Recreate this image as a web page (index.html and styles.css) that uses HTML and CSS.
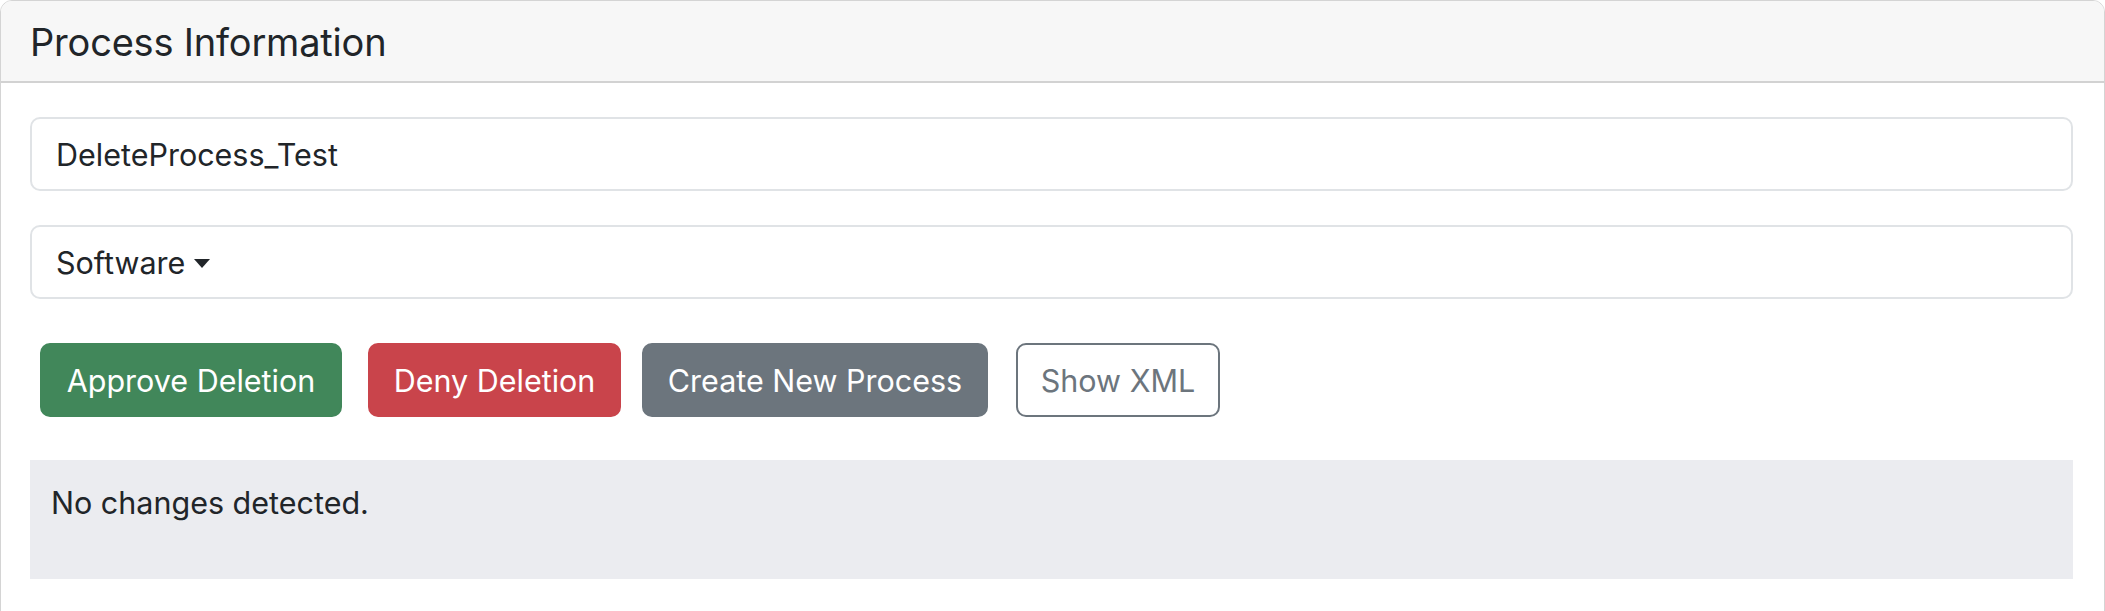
FILE: index.html
```html
<!DOCTYPE html>
<html>
<head>
<meta charset="utf-8">
<link rel="stylesheet" href="styles.css">
</head>
<body>
<div class="card">
  <div class="card-header">
    <h5 class="card-title">Process Information</h5>
  </div>
  <div class="card-body">
    <div class="field">DeleteProcess_Test</div>
    <div class="field dropdown">Software<span class="caret"></span></div>
    <div class="actions">
      <button class="btn btn-approve">Approve Deletion</button>
      <button class="btn btn-deny">Deny Deletion</button>
      <button class="btn btn-create">Create New Process</button>
      <button class="btn btn-xml">Show XML</button>
    </div>
    <div class="notice">No changes detected.</div>
  </div>
</div>
</body>
</html>
```
FILE: styles.css
```css
html, body {
  margin: 0;
  padding: 0;
  background: #ffffff;
}
body {
  font-family: Inter, "Liberation Sans", sans-serif;
  color: #212529;
}
.card {
  margin-top: 0;
  border: 1px solid #d4d4d4;
  border-radius: 12px;
  height: 640px;
  box-sizing: border-box;
  overflow: hidden;
}
.card-header {
  background: #f7f7f7;
  height: 80px;
  border-bottom: 2px solid #d2d2d2;
  display: flex;
  align-items: center;
  padding-left: 29px;
}
.card-title {
  margin: 0;
  font-size: 38px;
  font-weight: 400;
  line-height: 1;
  padding-top: 2px;
  letter-spacing: -0.2px;
}
.card-body {
  padding: 34px 31px 0 29px;
  display: flex;
  flex-direction: column;
}
.field {
  height: 74px;
  box-sizing: border-box;
  border: 2px solid #e0e3e6;
  border-radius: 10px;
  display: flex;
  align-items: center;
  padding-left: 24px;
  font-size: 30.5px;
  margin-bottom: 34px;
}
.dropdown {
  margin-bottom: 44px;
}
.caret {
  display: inline-block;
  width: 0;
  height: 0;
  border-left: 8px solid transparent;
  border-right: 8px solid transparent;
  border-top: 9px solid #212529;
  margin-left: 9px;
  margin-top: 2px;
}
.actions {
  display: flex;
  padding-left: 10px;
  margin-bottom: 43px;
}
.btn {
  flex: 0 0 auto;
  height: 74px;
  box-sizing: border-box;
  border: 2px solid transparent;
  border-radius: 10px;
  font-family: Inter, "Liberation Sans", sans-serif;
  font-size: 30.5px;
  padding: 0;
  color: #ffffff;
  display: flex;
  align-items: center;
  justify-content: center;
  white-space: nowrap;
}
.btn-approve {
  width: 302px;
  background: #41875a;
  border-color: #41875a;
}
.btn-deny {
  width: 253px;
  margin-left: 26px;
  background: #c9444b;
  border-color: #c9444b;
}
.btn-create {
  width: 346px;
  margin-left: 21px;
  background: #6c757d;
  border-color: #6c757d;
}
.btn-xml {
  width: 204px;
  margin-left: 28px;
  background: #ffffff;
  border-color: #6c757d;
  color: #6c757d;
}
.notice {
  height: 119px;
  box-sizing: border-box;
  background: #ebecf0;
  padding: 23px 0 0 21px;
  font-size: 30.5px;
  line-height: 40px;
}
```
